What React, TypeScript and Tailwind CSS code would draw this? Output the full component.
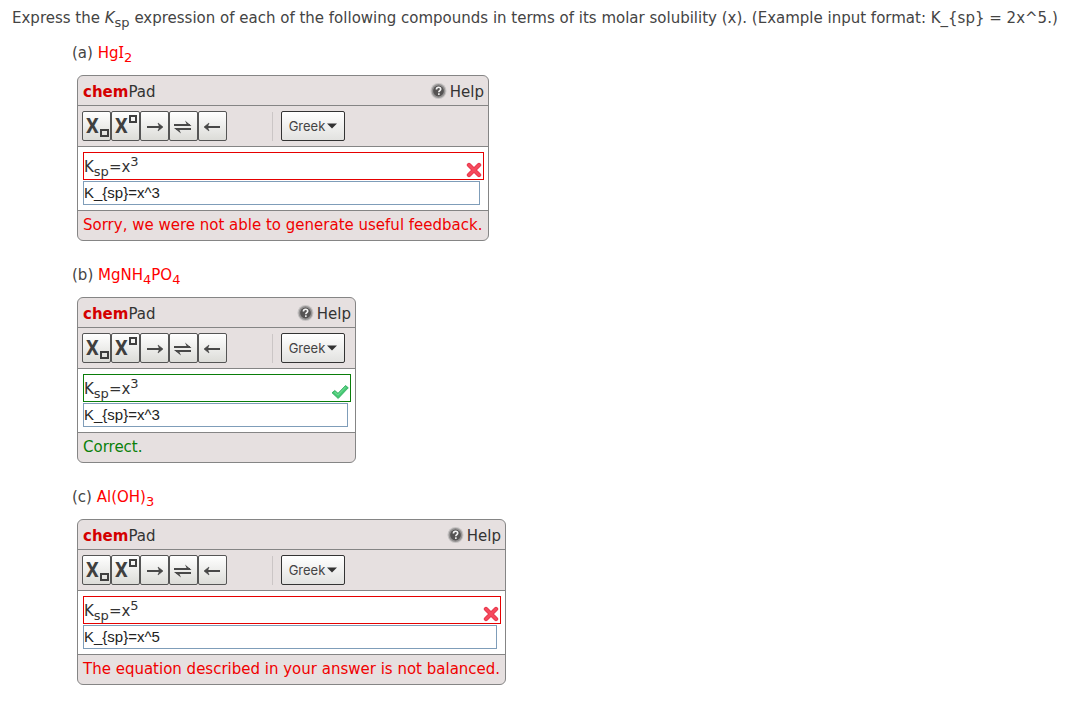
import React from "react";

type Status = "wrong" | "right";

interface Part {
  id: string;
  formula: React.ReactNode;
  name: string;
  width: string;
  exponent: string;
  source: string;
  status: Status;
  feedback: string;
}

const parts: Part[] = [
  {
    id: "a",
    formula: (<>Hg<span className="font-['Noto_Sans',sans-serif] text-base leading-none">I</span><Sub>2</Sub></>),
    name: "HgI2",
    width: "w-[412px]",
    exponent: "3",
    source: "K_{sp}=x^3",
    status: "wrong",
    feedback: "Sorry, we were not able to generate useful feedback.",
  },
  {
    id: "b",
    formula: (<>MgNH<Sub>4</Sub>PO<Sub>4</Sub></>),
    name: "MgNH4PO4",
    width: "w-[279px]",
    exponent: "3",
    source: "K_{sp}=x^3",
    status: "right",
    feedback: "Correct.",
  },
  {
    id: "c",
    formula: (<>Al(OH)<Sub>3</Sub></>),
    name: "Al(OH)3",
    width: "w-[429px]",
    exponent: "5",
    source: "K_{sp}=x^5",
    status: "wrong",
    feedback: "The equation described in your answer is not balanced.",
  },
];

function Sub({ children }: { children: React.ReactNode }) {
  return <span className="relative top-1 text-[13px] leading-none">{children}</span>;
}

function HelpIcon() {
  return (
    <svg width="17" height="17" viewBox="0 0 17 17" aria-hidden="true">
      <circle cx="8.5" cy="8" r="8" fill="#c6c3c3" />
      <circle cx="8.5" cy="8" r="6.9" fill="#959393" />
      <circle cx="8.5" cy="8" r="5.4" fill="#555353" />
      <path d="M6.4 6.6c0-1.5.9-2.3 2.2-2.3s2.1.8 2.1 1.9c0 1.3-1.9 1.5-1.9 3" fill="none" stroke="#f4f4f4" strokeWidth="1.6" />
      <rect x="8" y="10.3" width="1.7" height="1.6" fill="#f4f4f4" />
    </svg>
  );
}

function SubscriptIcon() {
  return (
    <svg width="27" height="28" viewBox="0 0 27 28" aria-hidden="true">
      <text x="3" y="21" fill="#3f3f3f" className="font-[Roboto,sans-serif] text-xl font-bold">X</text>
      <rect x="18" y="18" width="7" height="6" fill="none" stroke="#3f3f3f" strokeWidth="2" />
    </svg>
  );
}

function SuperscriptIcon() {
  return (
    <svg width="27" height="28" viewBox="0 0 27 28" aria-hidden="true">
      <text x="3" y="21" fill="#3f3f3f" className="font-[Roboto,sans-serif] text-xl font-bold">X</text>
      <rect x="18" y="4" width="6" height="6" fill="none" stroke="#3f3f3f" strokeWidth="2" />
    </svg>
  );
}

function RightArrowIcon() {
  return (
    <svg width="27" height="28" viewBox="0 0 27 28" aria-hidden="true">
      <path d="M6 15H20" stroke="#484848" strokeWidth="2" />
      <path d="M17 11L22 15L17 19L18.5 15Z" fill="#484848" stroke="#484848" strokeWidth="0.6" />
    </svg>
  );
}

function EquilibriumIcon() {
  return (
    <svg width="27" height="28" viewBox="0 0 27 28" aria-hidden="true">
      <path d="M4 13H20M6 17H21" stroke="#484848" strokeWidth="1.9" />
      <path d="M15 8.5L21.5 13.9H17.5ZM11 21.5L4 16.1H8.5Z" fill="#484848" />
    </svg>
  );
}

function LeftArrowIcon() {
  return (
    <svg width="27" height="28" viewBox="0 0 27 28" aria-hidden="true">
      <path d="M7 15H21" stroke="#484848" strokeWidth="2" />
      <path d="M10 11L5 15L10 19L8.5 15Z" fill="#484848" stroke="#484848" strokeWidth="0.6" />
    </svg>
  );
}

function WrongIcon() {
  return (
    <svg width="16" height="16" viewBox="0 0 16 16" aria-hidden="true">
      <path d="M3 3L13 13M13 3L3 13" stroke="#e83a4e" strokeWidth="4.4" strokeLinecap="round" />
      <path d="M3 3L13 13M13 3L3 13" stroke="#f64a5e" strokeWidth="2.4" strokeLinecap="round" />
    </svg>
  );
}

function RightIcon() {
  return (
    <svg width="18" height="16" viewBox="0 0 18 16" aria-hidden="true">
      <path d="M1 8.8L3.8 6.5L7 9.3L14.5 1.5L17.3 3.8L7.2 14.5Z" fill="#45c873" stroke="#2aa85a" strokeWidth="0.8" strokeLinejoin="round" />
      <path d="M3.5 8L7 11L14.5 3.2" fill="none" stroke="#6ad88e" strokeWidth="1.2" />
    </svg>
  );
}

const tools = [
  { label: "Subscript", Icon: SubscriptIcon },
  { label: "Superscript", Icon: SuperscriptIcon },
  { label: "Right arrow", Icon: RightArrowIcon },
  { label: "Equilibrium arrows", Icon: EquilibriumIcon },
  { label: "Left arrow", Icon: LeftArrowIcon },
];

function ChemPad({ part }: { part: Part }) {
  const wrong = part.status === "wrong";
  return (
    <div className={`${part.width} overflow-hidden rounded-md border border-[#858585] bg-[#e6e0e0] text-[#333]`}>
      <div className="flex h-[30px] items-center justify-between border-b border-[#858585] pt-0.5 pr-1 pl-[5px]">
        <div>
          <b className="text-[#d40000]">chem</b>Pad
        </div>
        <button type="button" className="flex items-center gap-[3px]">
          <HelpIcon />
          Help
        </button>
      </div>
      <div className="flex h-[41px] items-center border-b border-[#858585] pl-1">
        {tools.map(({ label, Icon }) => (
          <button
            key={label}
            type="button"
            aria-label={label}
            className="flex h-[30px] w-[29px] items-center justify-center rounded-xs border border-[#555] bg-linear-to-b from-white to-[#dcdcd8]"
          >
            <Icon />
          </button>
        ))}
        <div className="ml-[45px] h-[29px] w-px bg-[#cbc6c6]" />
        <button
          type="button"
          aria-haspopup="menu"
          className="ml-2 flex h-[30px] w-16 items-center justify-center gap-[2px] rounded-xs border border-[#333] bg-linear-to-b from-white to-[#e2e2e0] font-[Inter,sans-serif] text-[13px] text-[#444]"
        >
          Greek
          <svg width="10" height="6" viewBox="0 0 10 6" aria-hidden="true">
            <path d="M0 0.5H10L5 5.5Z" fill="#333" />
          </svg>
        </button>
      </div>
      <div className="border-b border-[#858585] bg-white p-[5px] pr-1">
        <div className={`flex h-7 items-center justify-between border ${wrong ? "border-[#e60000]" : "border-[#0a7d0a]"}`}>
          <div className="pt-0.5">
            K<Sub>sp</Sub>=x<span className="relative -top-1.5 text-[13px] leading-none">{part.exponent}</span>
          </div>
          <span className="pt-2 pr-px">{wrong ? <WrongIcon /> : <RightIcon />}</span>
        </div>
        <input
          aria-label={`Expression for ${part.name}`}
          defaultValue={part.source}
          className="mt-px block h-6 w-[99%] border border-[#7f9db9] pb-0.5 font-['Liberation_Sans',Arial,sans-serif] text-[15px] text-[#222] outline-none"
        />
      </div>
      <p className={`flex h-[29px] items-center pb-0.5 pl-[5px] whitespace-nowrap ${wrong ? "text-[#f00000]" : "text-[#0a800a]"}`}>
        {part.feedback}
      </p>
    </div>
  );
}

export default function App() {
  return (
    <main className="bg-white pt-2 pl-3 font-['DejaVu_Sans',Verdana,sans-serif] text-[15px] leading-5 text-[#444]">
      <p>
        Express the <i>K</i><Sub>sp</Sub> expression of each of the following compounds in terms of its molar solubility (x). (Example input format: K_{"{sp}"} = 2x^5.)
      </p>
      <div className="flex flex-col gap-6 pt-[15px] pl-[60px]">
        {parts.map((part) => (
          <section key={part.id}>
            <h2 className="h-8">
              ({part.id}) <span className="text-[#ff0000]">{part.formula}</span>
            </h2>
            <div className="pl-[5px]">
              <ChemPad part={part} />
            </div>
          </section>
        ))}
      </div>
    </main>
  );
}
